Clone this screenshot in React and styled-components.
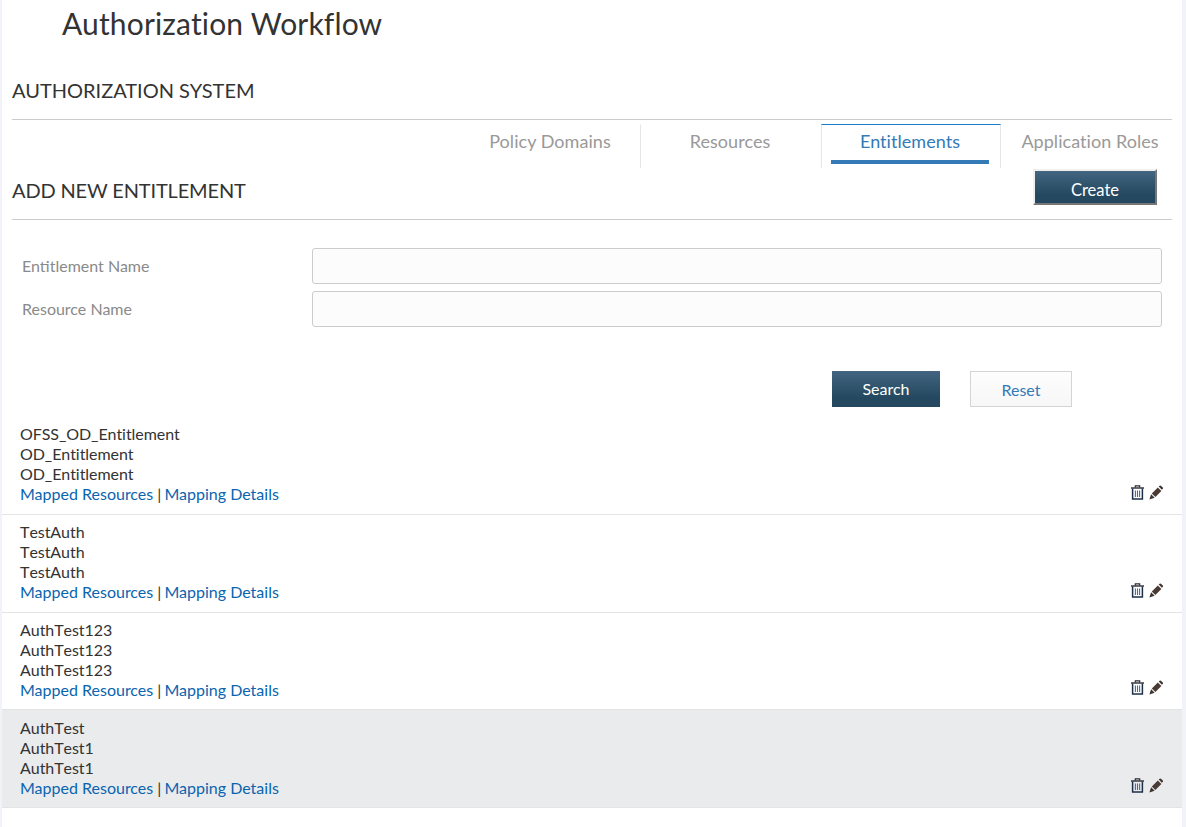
import React from 'react';
import styled, { createGlobalStyle } from 'styled-components';

const Global = createGlobalStyle`
  html, body { margin: 0; padding: 0; background: #f2f2f9; }
  body { font-family: Lato, "Liberation Sans", sans-serif; color: #333; }
  * { box-sizing: border-box; }
`;

const Page = styled.div`
  width: 1180px;
  height: 827px;
  margin-left: 2px;
  background: #fff;
  overflow: hidden;
`;

const Title = styled.h1`
  margin: 0;
  padding-left: 60px;
  height: 68px;
  font-size: 30px;
  line-height: 46px;
  font-weight: 400;
  letter-spacing: 0.15px;
  color: #333;
`;

const SectionHead = styled.div`
  margin: 0 10px;
  height: 52px;
  border-bottom: 1px solid #ccc;
  font-size: 20px;
  line-height: 44px;
  color: #333;
`;

const Tabs = styled.div`
  display: flex;
  justify-content: flex-end;
  height: 44px;
  margin-top: 4px;
  margin-right: 1px;
`;

const Tab = styled.div`
  position: relative;
  width: 180px;
  padding-right: 2px;
  text-align: center;
  font-size: 18px;
  line-height: 33px;
  letter-spacing: 0.05px;
  color: ${p => (p.$active ? '#337ab7' : '#999')};
  border-top: 1px solid ${p => (p.$active ? '#1a7ac8' : 'transparent')};
  border-left: 1px solid ${p => (p.$active ? '#e4e7ea' : 'transparent')};
  border-right: 1px solid ${p => (p.$active || p.$divider ? '#e4e7ea' : 'transparent')};
`;

const TabBar = styled.span`
  position: absolute;
  left: 9px;
  right: 11px;
  bottom: 4px;
  height: 4px;
  background: #337ab7;
`;

const SubHead = styled.div`
  display: flex;
  justify-content: space-between;
  margin: 1px 10px 0;
  height: 51px;
  border-bottom: 1px solid #ccc;
`;

const SubTitle = styled.span`
  font-size: 20px;
  line-height: 42px;
  letter-spacing: -0.15px;
  color: #333;
`;

const CreateButton = styled.button`
  width: 124px;
  height: 36px;
  margin-right: 15px;
  padding: 6px 0 0;
  font: 16.5px Lato, sans-serif;
  color: #fff;
  background: linear-gradient(#436581, #24485f 75%);
  border: 2px solid;
  border-color: #f0f0f0 #767676 #767676 #f0f0f0;
`;

const Form = styled.div`
  display: grid;
  grid-template-columns: 290px 850px;
  row-gap: 7px;
  padding: 28px 0 0 20px;
  align-items: center;
`;

const Label = styled.label`
  padding-bottom: 2px;
  font-size: 16px;
  color: #8a8a8a;
`;

const Field = styled.input`
  height: 36px;
  background: #fcfcfc;
  border: 1px solid #ccc;
  border-radius: 3px;
`;

const Actions = styled.div`
  display: flex;
  gap: 30px;
  margin: 44px 0 10.15px 830px;
`;

const SearchButton = styled.button`
  width: 108px;
  height: 36px;
  padding: 0 0 2px;
  border: 0;
  font: 16px Lato, sans-serif;
  color: #fff;
  background: linear-gradient(#436581, #24485f 75%);
`;

const ResetButton = styled.button`
  width: 102px;
  height: 36px;
  padding: 1px 0 0;
  font: 16px Lato, sans-serif;
  color: #337ab7;
  background: linear-gradient(#fdfdfd, #f7f7f7);
  border: 1px solid #d4d4d4;
`;

const Row = styled.div`
  position: relative;
  height: 97.7px;
  padding: 7.3px 18px 0;
  font-size: 16px;
  line-height: 20px;
  color: #333;
  background: ${p => (p.$selected ? '#eaebed' : '#fff')};
  border-bottom: 1px solid #e4e4e4;
`;

const NameLine = styled.div`
  font-kerning: none;
  letter-spacing: -0.06px;
`;

const LinkLine = styled.div`
  color: #333;
`;

const Separator = styled.span`
  margin-right: -1px;
`;

const Link = styled.a`
  color: #0a64b0;
  text-decoration: none;
`;

const RowIcons = styled.div`
  position: absolute;
  right: 19px;
  bottom: 14px;
  display: flex;
  gap: 4px;
  align-items: center;
`;

const IconSvg = styled.svg`
  display: block;
  width: 14px;
  height: 15px;
`;

function TrashIcon() {
  return (
    <IconSvg viewBox="0 0 14 15">
      <path d="M4.3 2.4V.8h4.4v1.6" fill="none" stroke="#2b2b33" strokeWidth="1.2" />
      <path d="M0 3h13" stroke="#2b2b33" strokeWidth="1.4" />
      <path d="M1.6 3.4V14h9.8V3.4" fill="none" stroke="#1f2f48" strokeWidth="1.5" />
      <path d="M4.4 5.5V12M6.5 5.5V12M8.6 5.5V12" stroke="#3f6f9e" strokeWidth="1.1" />
    </IconSvg>
  );
}

function PencilIcon() {
  return (
    <IconSvg viewBox="0 0 14 15">
      <path d="M2.8 8.4 8.8 2.4l3.6 3.6-6 6z" fill="#4a3a34" />
      <path d="M2.1 9.2 5.6 12.7.4 14.4z" fill="#3d3330" />
      <path d="M9.7 1.6 10.7.7q.6-.5 1.2 0l1.9 1.9q.5.6 0 1.2l-.9 1z" fill="#3d3330" />
    </IconSvg>
  );
}

const rows = [
  ['OFSS_OD_Entitlement', 'OD_Entitlement', 'OD_Entitlement'],
  ['TestAuth', 'TestAuth', 'TestAuth'],
  ['AuthTest123', 'AuthTest123', 'AuthTest123'],
  ['AuthTest', 'AuthTest1', 'AuthTest1'],
];

export default function App() {
  return (
    <Page>
      <Global />
      <Title>Authorization Workflow</Title>
      <SectionHead>AUTHORIZATION SYSTEM</SectionHead>
      <Tabs>
        <Tab $divider>Policy Domains</Tab>
        <Tab>Resources</Tab>
        <Tab $active>Entitlements<TabBar /></Tab>
        <Tab>Application Roles</Tab>
      </Tabs>
      <SubHead>
        <SubTitle>ADD NEW ENTITLEMENT</SubTitle>
        <CreateButton>Create</CreateButton>
      </SubHead>
      <Form>
        <Label>Entitlement Name</Label>
        <Field />
        <Label>Resource Name</Label>
        <Field />
      </Form>
      <Actions>
        <SearchButton>Search</SearchButton>
        <ResetButton>Reset</ResetButton>
      </Actions>
      {rows.map((lines, i) => (
        <Row key={i} $selected={i === 3}>
          {lines.map((line, j) => <NameLine key={j}>{line}</NameLine>)}
          <LinkLine><Link href="#">Mapped Resources</Link> <Separator>|</Separator> <Link href="#">Mapping Details</Link></LinkLine>
          <RowIcons><TrashIcon /><PencilIcon /></RowIcons>
        </Row>
      ))}
    </Page>
  );
}
